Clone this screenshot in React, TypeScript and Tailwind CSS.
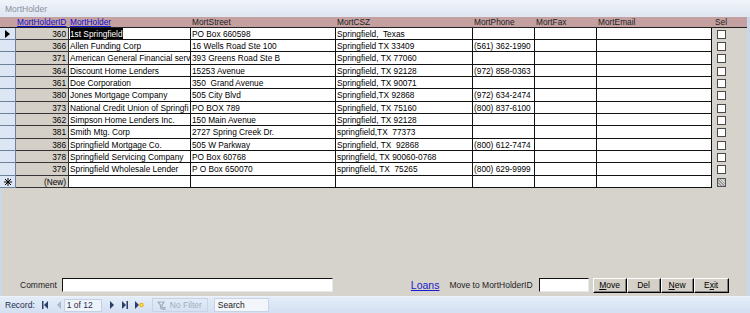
import React from "react";

const COLS =
  "grid grid-cols-[16px_53px_122px_145px_137px_62px_62px_115px_1fr] grid-rows-[100%]";

const rows: [number, string, string, string, string][] = [
  [360, "1st Springfield", "PO Box 660598", "Springfield,  Texas", ""],
  [366, "Allen Funding Corp", "16 Wells Road Ste 100", "Springfield TX 33409", "(561) 362-1990"],
  [371, "American General Financial servi", "393 Greens Road Ste B", "Springfield, TX 77060", ""],
  [364, "Discount Home Lenders", "15253 Avenue", "Springfield, TX 92128", "(972) 858-0363"],
  [361, "Doe Corporation", "350  Grand Avenue", "Springfield, TX 90071", ""],
  [380, "Jones Mortgage Company", "505 City Blvd", "Springfield,TX 92868", "(972) 634-2474"],
  [373, "National Credit Union of Springfi", "PO BOX 789", "Springfield, TX 75160", "(800) 837-6100"],
  [362, "Simpson Home Lenders Inc.", "150 Main Avenue", "Springfield, TX 92128", ""],
  [381, "Smith Mtg. Corp", "2727 Spring Creek Dr.", "springfield,TX  77373", ""],
  [386, "Springfield Mortgage Co.", "505 W Parkway", "Springfield, TX  92868", "(800) 612-7474"],
  [378, "Springfield Servicing Company", "PO Box 60768", "springfield, TX 90060-0768", ""],
  [379, "Springfield Wholesale Lender", "P O Box 650070", "springfield, TX  75265", "(800) 629-9999"],
];

const cell =
  "h-full min-h-0 overflow-hidden whitespace-pre border-r border-b border-[#111] bg-white pl-[1px] flex items-center";

// 13 rows in 160px: every third row is a pixel taller
const rowH = (i: number) => (i % 3 === 2 ? "h-[13px]" : "h-[12px]");

const Check = ({ newRow }: { newRow?: boolean }) => (
  <div className="flex h-full min-h-0 items-center pl-[5px]">
    <div
      className={
        newRow
          ? "h-[9px] w-[9px] border border-[#555] bg-[repeating-linear-gradient(45deg,#999_0px,#999_1px,#e0e0e0_1px,#e0e0e0_2px)]"
          : "h-[9px] w-[9px] border border-[#4a4a4a] bg-white"
      }
    />
  </div>
);

const Selector = ({ kind }: { kind?: "current" | "new" }) => (
  <div className="flex h-full min-h-0 items-center justify-center border-r border-b border-[#6f809c] bg-[#dce6f4]">
    {kind === "current" && (
      <svg width="5" height="8" viewBox="0 0 5 8">
        <polygon points="0,0 5,4 0,8" fill="#000" />
      </svg>
    )}
    {kind === "new" && (
      <svg width="8" height="8" viewBox="0 0 8 8" stroke="#000" strokeWidth="1">
        <line x1="4" y1="0" x2="4" y2="8" />
        <line x1="0" y1="4" x2="8" y2="4" />
        <line x1="1" y1="1" x2="7" y2="7" />
        <line x1="7" y1="1" x2="1" y2="7" />
      </svg>
    )}
  </div>
);

const Btn = ({ children }: { children: React.ReactNode }) => (
  <button className="flex h-[15px] items-center justify-center border border-black border-t-white border-l-white bg-[#d4d0c8] text-[8.5px] text-black shadow-[inset_-1px_-1px_0_#808080]">
    {children}
  </button>
);

const NavIcon = ({ d, fill = "#2a3e66" }: { d: string; fill?: string }) => (
  <svg width="7" height="8" viewBox="0 0 7 8">
    <path d={d} fill={fill} />
  </svg>
);

export default function App() {
  return (
    <div className="flex h-[313px] w-[750px] flex-col overflow-hidden bg-[#d6d2cc] font-['Liberation_Sans',Arial,sans-serif] text-[8.3px] leading-[10px] text-black">
      {/* caption */}
      <div className="flex h-[17px] items-center bg-gradient-to-b from-[#f0f4fa] to-[#dee6f2] pl-[5px] text-[8.5px] text-[#8a909c]">
        MortHolder
      </div>

      <div className="flex flex-1 flex-col border-r-[3px] border-[#c9d7eb]">
        {/* column headers */}
        <div className={`${COLS} h-[11px] border-b border-[#222] bg-[#c4a0a0]`}>
          <div />
          <div className="pl-[1px] text-[#1010d0] underline">MortHolderID</div>
          <div className="pl-[1px] text-[#1010d0] underline">MortHolder</div>
          <div className="pl-[1px] text-[#222]">MortStreet</div>
          <div className="pl-[1px] text-[#222]">MortCSZ</div>
          <div className="pl-[1px] text-[#222]">MortPhone</div>
          <div className="pl-[1px] text-[#222]">MortFax</div>
          <div className="pl-[1px] text-[#222]">MortEmail</div>
          <div className="pl-[3px] text-[#222]">Sel</div>
        </div>

        {/* datasheet rows */}
        {rows.map(([id, holder, street, csz, phone], i) => (
          <div key={id} className={`${COLS} ${rowH(i)}`}>
            <Selector kind={i === 0 ? "current" : undefined} />
            <div className="flex h-full min-h-0 items-center justify-end border-r border-b border-[#333] bg-[#d4d0c8] pr-[2px]">
              {id}
            </div>
            <div className={cell}>
              {i === 0 ? (
                <span className="flex h-full items-center bg-black text-white">{holder}</span>
              ) : (
                holder
              )}
            </div>
            <div className={cell}>{street}</div>
            <div className={cell}>{csz}</div>
            <div className={cell}>{phone}</div>
            <div className={cell} />
            <div className={cell} />
            <Check />
          </div>
        ))}
        <div className={`${COLS} ${rowH(12)}`}>
          <Selector kind="new" />
          <div className="flex h-full min-h-0 items-center justify-end border-r border-b border-[#333] bg-[#d4d0c8] pr-[2px]">
            (New)
          </div>
          <div className={cell} />
          <div className={cell} />
          <div className={cell} />
          <div className={cell} />
          <div className={cell} />
          <div className={cell} />
          <Check newRow />
        </div>

        {/* bottom controls */}
        <div className="flex flex-1 items-end border-l-2 border-[#c9d7eb] pb-[3px]">
          <div className="flex h-[16px] items-center text-[8.5px]">
            <span className="ml-[18px] text-[#222]">Comment</span>
            <div className="ml-[5px] h-[14px] w-[271px] border border-[#111] border-r-[#e8e8e8] border-b-[#e8e8e8] bg-white" />
            <span className="ml-[78px] text-[10.5px] leading-[12px] text-[#1a1acc] underline">Loans</span>
            <span className="ml-[10px] text-[#222]">Move to MortHolderID</span>
            <div className="ml-[6px] h-[14px] w-[50px] border border-[#111] border-r-[#e8e8e8] border-b-[#e8e8e8] bg-white" />
            <div className="ml-[4px] grid grid-cols-[34px_34px_33px_35px]">
              <Btn>
                <span className="underline">M</span>ove
              </Btn>
              <Btn>Del</Btn>
              <Btn>
                <span className="underline">N</span>ew
              </Btn>
              <Btn>
                E<span className="underline">x</span>it
              </Btn>
            </div>
          </div>
        </div>
      </div>

      {/* record navigation bar */}
      <div className="flex h-[17px] items-center border-t border-[#eef3fb] bg-gradient-to-b from-[#e4edf9] to-[#d3e0f2] text-[8.5px] text-[#1e2d4c]">
        <span className="ml-[5px]">Record:</span>
        <div className="ml-[7px] flex items-center gap-[7px]">
          <NavIcon d="M0 0h1.5v8H0zM6 0v8L2 4z" />
          <NavIcon d="M5 0v8L1 4z" fill="#a9b6ca" />
        </div>
        <div className="ml-[1px] flex h-[13px] w-[38px] items-center border border-[#c3d1e4] bg-[#eef3fa] pl-[2px]">
          1 of 12
        </div>
        <div className="ml-[7px] flex items-center gap-[6px]">
          <NavIcon d="M1 0v8l4-4z" />
          <NavIcon d="M0 0v8l4-4zM4.5 0H6v8H4.5z" />
          <svg width="9" height="8" viewBox="0 0 9 8">
            <path d="M0 0v8l4-4z" fill="#2a3e66" />
            <circle cx="6.5" cy="4" r="2.2" fill="#f0b400" />
            <circle cx="6.5" cy="4" r="1" fill="#ffe680" />
          </svg>
        </div>
        <div className="ml-[8px] flex h-[14px] w-[56px] items-center gap-[4px] border border-[#c8d4e6] pl-[4px] text-[#a3adbd]">
          <svg width="9" height="9" viewBox="0 0 9 9" fill="none" stroke="#a3adbd" strokeWidth="1.2">
            <path d="M1 1h6L5 4v4L3.5 7V4z" />
            <path d="M5.5 6l3 3M8.5 6l-3 3" />
          </svg>
          No Filter
        </div>
        <div className="ml-[6px] flex h-[14px] w-[55px] items-center border border-[#c8d4e6] bg-[#f2f6fb] pl-[3px] text-[#222]">
          Search
        </div>
      </div>
    </div>
  );
}
